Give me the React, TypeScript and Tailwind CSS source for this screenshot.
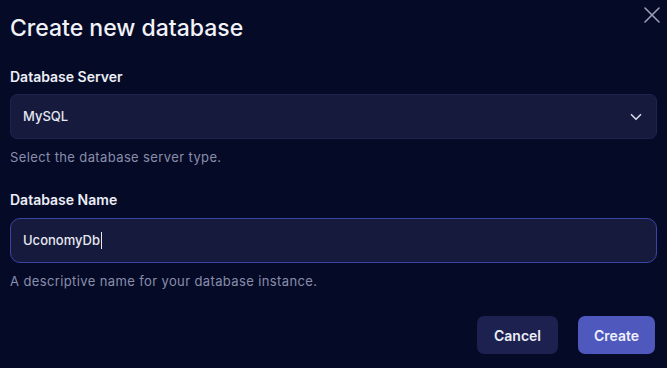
import { X, ChevronDown } from "lucide-react";

export default function App() {
  return (
    <div
      className="relative h-[368px] w-[667px] overflow-hidden bg-[#050a27] px-[10px] text-white"
      style={{ fontFamily: "Inter, 'Noto Sans', sans-serif" }}
    >
      <button
        type="button"
        className="absolute right-[1px] top-[1px] text-[#9a9cb3]"
        aria-label="Close"
      >
        <X className="h-[28px] w-[28px]" strokeWidth={1.4} />
      </button>

      <h2 className="pt-[13px] text-[23px] font-medium leading-[30px] text-[#f2f3f8]">
        Create new database
      </h2>

      <div className="mt-[25px]">
        <label className="block text-[14px] font-semibold leading-[18px] text-[#eceef6]">
          Database Server
        </label>
        <div className="mt-[8px] flex h-[45px] items-center justify-between rounded-[7px] border border-[#1e2350] bg-[#161a3c] pl-[12px] pr-[11px]">
          <span className="text-[13px] font-medium text-[#e6e8f2]">MySQL</span>
          <ChevronDown className="h-[18px] w-[18px] text-[#d7d9ea]" strokeWidth={2.2} />
        </div>
        <p className="mt-[10px] text-[13px] leading-[16px] tracking-[0.38px] text-[#8a8eab]">
          Select the database server type.
        </p>
      </div>

      <div className="mt-[26px]">
        <label className="block text-[14px] font-semibold leading-[18px] text-[#eceef6]">
          Database Name
        </label>
        <div className="mt-[9px] flex h-[45px] items-center rounded-[10px] border border-[#3a45a3] bg-[#161a3c] pl-[12px]">
          <span className="text-[13px] font-medium text-[#e6e8f2]">UconomyDb</span>
          <span className="ml-px h-[17px] w-px bg-[#e6e8f2]" />
        </div>
        <p className="mt-[10px] text-[13px] leading-[16px] tracking-[0.38px] text-[#8a8eab]">
          A descriptive name for your database instance.
        </p>
      </div>

      <div className="mt-[27px] flex justify-end gap-[20px] pr-[2px]">
        <button
          type="button"
          className="h-[38px] w-[81px] rounded-[7px] bg-[#1d2150] text-[14px] font-semibold text-[#eceef6]"
        >
          Cancel
        </button>
        <button
          type="button"
          className="h-[38px] w-[77px] rounded-[7px] bg-[#4f58bd] text-[14px] font-semibold text-[#eef0fb]"
        >
          Create
        </button>
      </div>
    </div>
  );
}
